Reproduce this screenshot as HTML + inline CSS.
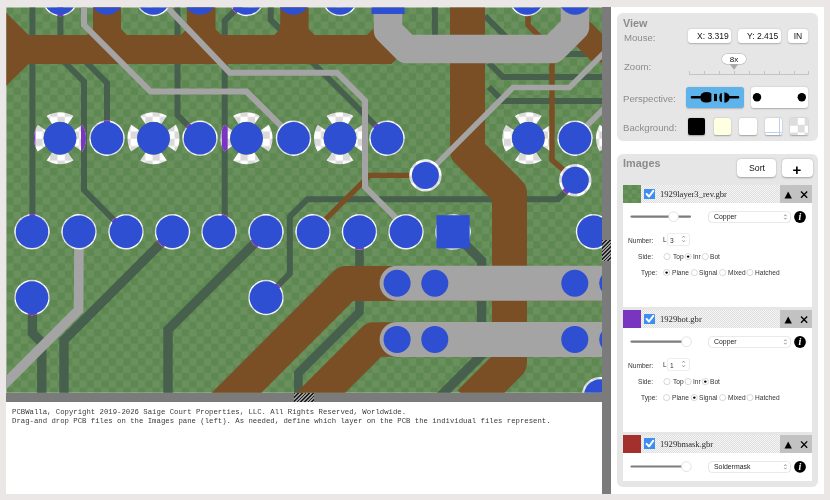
<!DOCTYPE html>
<html><head><meta charset="utf-8">
<style>
html,body{margin:0;padding:0;}
body{width:830px;height:500px;overflow:hidden;position:relative;background:#ece7e7;font-family:"Liberation Sans",sans-serif;}
.t{position:absolute;white-space:nowrap;line-height:1;will-change:transform;}
.r{position:absolute;}
</style></head><body>
<svg width="602" height="393" viewBox="0 0 602 393" style="position:absolute;left:0;top:0">
<defs>
<pattern id="gchk" patternUnits="userSpaceOnUse" x="6.20" y="7.00" width="14.64" height="14.64"><rect width="14.64" height="14.64" fill="#5d8851"/><rect x="7.32" width="7.32" height="7.32" fill="#6a915d"/><rect y="7.32" width="7.32" height="7.32" fill="#6a915d"/></pattern>
<pattern id="wchk" patternUnits="userSpaceOnUse" x="6.20" y="7.00" width="14.64" height="14.64"><rect width="14.64" height="14.64" fill="#d9d9d9"/><rect x="7.32" width="7.32" height="7.32" fill="#ffffff"/><rect y="7.32" width="7.32" height="7.32" fill="#ffffff"/></pattern>
<clipPath id="cv"><rect x="6.4" y="7.4" width="595.6" height="385.35"/></clipPath>
</defs>
<g clip-path="url(#cv)">
<rect x="0" y="0" width="602" height="393" fill="url(#gchk)"/>
<path d="M32.4 0.0 L32.4 232.0" fill="none" stroke="#475f4d" stroke-width="6" stroke-linejoin="miter" stroke-linecap="butt" />
<path d="M60.4 -2.0 L60.4 58.0 L84.0 81.6 L84.0 190.0 L126.0 232.0" fill="none" stroke="#475f4d" stroke-width="6" stroke-linejoin="miter" stroke-linecap="butt" />
<path d="M83.0 59.0 L107.0 83.0 L107.0 138.0" fill="none" stroke="#475f4d" stroke-width="6" stroke-linejoin="miter" stroke-linecap="butt" />
<path d="M177.5 0.0 L177.5 115.0 L200.0 137.5" fill="none" stroke="#475f4d" stroke-width="6" stroke-linejoin="miter" stroke-linecap="butt" />
<path d="M247.0 -1.5 L224.7 20.8 L224.7 232.0" fill="none" stroke="#475f4d" stroke-width="6" stroke-linejoin="miter" stroke-linecap="butt" />
<path d="M270.7 0.0 L270.7 20.0 L285.0 34.0" fill="none" stroke="#475f4d" stroke-width="6" stroke-linejoin="miter" stroke-linecap="butt" />
<path d="M303.0 53.0 L385.5 135.5" fill="none" stroke="#475f4d" stroke-width="6" stroke-linejoin="miter" stroke-linecap="butt" />
<path d="M434.9 0.0 L434.9 40.0" fill="none" stroke="#475f4d" stroke-width="6" stroke-linejoin="miter" stroke-linecap="butt" />
<path d="M485.0 16.0 L510.0 41.0" fill="none" stroke="#475f4d" stroke-width="6" stroke-linejoin="miter" stroke-linecap="butt" />
<path d="M489.0 63.0 L503.0 77.0 L610.0 77.0" fill="none" stroke="#475f4d" stroke-width="6" stroke-linejoin="miter" stroke-linecap="butt" />
<path d="M555.0 54.0 L610.0 54.0" fill="none" stroke="#475f4d" stroke-width="6" stroke-linejoin="miter" stroke-linecap="butt" />
<path d="M489.0 87.0 L503.0 101.0 L610.0 101.0" fill="none" stroke="#475f4d" stroke-width="6" stroke-linejoin="miter" stroke-linecap="butt" />
<path d="M266.0 297.5 L289.8 273.7 L289.8 216.5 L307.5 199.2 L558.0 199.2 L575.3 181.9" fill="none" stroke="#475f4d" stroke-width="6" stroke-linejoin="miter" stroke-linecap="butt" />
<path d="M453.0 232.0 L481.6 260.6 L481.6 355.0 L429.0 407.6" fill="none" stroke="#475f4d" stroke-width="9.4" stroke-linejoin="miter" stroke-linecap="butt" />
<path d="M32.4 297.5 L32.4 333.0 L41.8 342.4 L41.8 400.0" fill="none" stroke="#475f4d" stroke-width="9.4" stroke-linejoin="miter" stroke-linecap="butt" />
<path d="M172.5 231.8 L64.0 340.3 L64.0 400.0" fill="none" stroke="#475f4d" stroke-width="9.4" stroke-linejoin="miter" stroke-linecap="butt" />
<path d="M266.0 231.8 L168.0 329.8 L168.0 400.0" fill="none" stroke="#475f4d" stroke-width="9.4" stroke-linejoin="miter" stroke-linecap="butt" />
<path d="M359.5 231.8 L359.5 312.0 L298.4 373.0 L298.4 400.0" fill="none" stroke="#475f4d" stroke-width="8.6" stroke-linejoin="miter" stroke-linecap="butt" />
<path d="M82.29 124.81 A26.0 26.0 0 0 1 82.29 151.59 L74.26 146.10 A16.3 16.3 0 0 0 74.26 130.30 Z M73.39 160.49 A26.0 26.0 0 0 1 46.61 160.49 L52.10 152.46 A16.3 16.3 0 0 0 67.90 152.46 Z M37.71 151.59 A26.0 26.0 0 0 1 37.71 124.81 L45.74 130.30 A16.3 16.3 0 0 0 45.74 146.10 Z M46.61 115.91 A26.0 26.0 0 0 1 73.39 115.91 L67.90 123.94 A16.3 16.3 0 0 0 52.10 123.94 Z M175.79 124.81 A26.0 26.0 0 0 1 175.79 151.59 L167.76 146.10 A16.3 16.3 0 0 0 167.76 130.30 Z M166.89 160.49 A26.0 26.0 0 0 1 140.11 160.49 L145.60 152.46 A16.3 16.3 0 0 0 161.40 152.46 Z M131.21 151.59 A26.0 26.0 0 0 1 131.21 124.81 L139.24 130.30 A16.3 16.3 0 0 0 139.24 146.10 Z M140.11 115.91 A26.0 26.0 0 0 1 166.89 115.91 L161.40 123.94 A16.3 16.3 0 0 0 145.60 123.94 Z M268.79 124.81 A26.0 26.0 0 0 1 268.79 151.59 L260.76 146.10 A16.3 16.3 0 0 0 260.76 130.30 Z M259.89 160.49 A26.0 26.0 0 0 1 233.11 160.49 L238.60 152.46 A16.3 16.3 0 0 0 254.40 152.46 Z M224.21 151.59 A26.0 26.0 0 0 1 224.21 124.81 L232.24 130.30 A16.3 16.3 0 0 0 232.24 146.10 Z M233.11 115.91 A26.0 26.0 0 0 1 259.89 115.91 L254.40 123.94 A16.3 16.3 0 0 0 238.60 123.94 Z M362.29 124.81 A26.0 26.0 0 0 1 362.29 151.59 L354.26 146.10 A16.3 16.3 0 0 0 354.26 130.30 Z M353.39 160.49 A26.0 26.0 0 0 1 326.61 160.49 L332.10 152.46 A16.3 16.3 0 0 0 347.90 152.46 Z M317.71 151.59 A26.0 26.0 0 0 1 317.71 124.81 L325.74 130.30 A16.3 16.3 0 0 0 325.74 146.10 Z M326.61 115.91 A26.0 26.0 0 0 1 353.39 115.91 L347.90 123.94 A16.3 16.3 0 0 0 332.10 123.94 Z M550.59 124.81 A26.0 26.0 0 0 1 550.59 151.59 L542.56 146.10 A16.3 16.3 0 0 0 542.56 130.30 Z M541.69 160.49 A26.0 26.0 0 0 1 514.91 160.49 L520.40 152.46 A16.3 16.3 0 0 0 536.20 152.46 Z M506.01 151.59 A26.0 26.0 0 0 1 506.01 124.81 L514.04 130.30 A16.3 16.3 0 0 0 514.04 146.10 Z M514.91 115.91 A26.0 26.0 0 0 1 541.69 115.91 L536.20 123.94 A16.3 16.3 0 0 0 520.40 123.94 Z M644.29 124.81 A26.0 26.0 0 0 1 644.29 151.59 L636.26 146.10 A16.3 16.3 0 0 0 636.26 130.30 Z M635.39 160.49 A26.0 26.0 0 0 1 608.61 160.49 L614.10 152.46 A16.3 16.3 0 0 0 629.90 152.46 Z M599.71 151.59 A26.0 26.0 0 0 1 599.71 124.81 L607.74 130.30 A16.3 16.3 0 0 0 607.74 146.10 Z M608.61 115.91 A26.0 26.0 0 0 1 635.39 115.91 L629.90 123.94 A16.3 16.3 0 0 0 614.10 123.94 Z" fill="url(#wchk)"/>
<clipPath id="tclip"><path d="M82.29 124.81 A26.0 26.0 0 0 1 82.29 151.59 L74.26 146.10 A16.3 16.3 0 0 0 74.26 130.30 Z M73.39 160.49 A26.0 26.0 0 0 1 46.61 160.49 L52.10 152.46 A16.3 16.3 0 0 0 67.90 152.46 Z M37.71 151.59 A26.0 26.0 0 0 1 37.71 124.81 L45.74 130.30 A16.3 16.3 0 0 0 45.74 146.10 Z M46.61 115.91 A26.0 26.0 0 0 1 73.39 115.91 L67.90 123.94 A16.3 16.3 0 0 0 52.10 123.94 Z M175.79 124.81 A26.0 26.0 0 0 1 175.79 151.59 L167.76 146.10 A16.3 16.3 0 0 0 167.76 130.30 Z M166.89 160.49 A26.0 26.0 0 0 1 140.11 160.49 L145.60 152.46 A16.3 16.3 0 0 0 161.40 152.46 Z M131.21 151.59 A26.0 26.0 0 0 1 131.21 124.81 L139.24 130.30 A16.3 16.3 0 0 0 139.24 146.10 Z M140.11 115.91 A26.0 26.0 0 0 1 166.89 115.91 L161.40 123.94 A16.3 16.3 0 0 0 145.60 123.94 Z M268.79 124.81 A26.0 26.0 0 0 1 268.79 151.59 L260.76 146.10 A16.3 16.3 0 0 0 260.76 130.30 Z M259.89 160.49 A26.0 26.0 0 0 1 233.11 160.49 L238.60 152.46 A16.3 16.3 0 0 0 254.40 152.46 Z M224.21 151.59 A26.0 26.0 0 0 1 224.21 124.81 L232.24 130.30 A16.3 16.3 0 0 0 232.24 146.10 Z M233.11 115.91 A26.0 26.0 0 0 1 259.89 115.91 L254.40 123.94 A16.3 16.3 0 0 0 238.60 123.94 Z M362.29 124.81 A26.0 26.0 0 0 1 362.29 151.59 L354.26 146.10 A16.3 16.3 0 0 0 354.26 130.30 Z M353.39 160.49 A26.0 26.0 0 0 1 326.61 160.49 L332.10 152.46 A16.3 16.3 0 0 0 347.90 152.46 Z M317.71 151.59 A26.0 26.0 0 0 1 317.71 124.81 L325.74 130.30 A16.3 16.3 0 0 0 325.74 146.10 Z M326.61 115.91 A26.0 26.0 0 0 1 353.39 115.91 L347.90 123.94 A16.3 16.3 0 0 0 332.10 123.94 Z M550.59 124.81 A26.0 26.0 0 0 1 550.59 151.59 L542.56 146.10 A16.3 16.3 0 0 0 542.56 130.30 Z M541.69 160.49 A26.0 26.0 0 0 1 514.91 160.49 L520.40 152.46 A16.3 16.3 0 0 0 536.20 152.46 Z M506.01 151.59 A26.0 26.0 0 0 1 506.01 124.81 L514.04 130.30 A16.3 16.3 0 0 0 514.04 146.10 Z M514.91 115.91 A26.0 26.0 0 0 1 541.69 115.91 L536.20 123.94 A16.3 16.3 0 0 0 520.40 123.94 Z M644.29 124.81 A26.0 26.0 0 0 1 644.29 151.59 L636.26 146.10 A16.3 16.3 0 0 0 636.26 130.30 Z M635.39 160.49 A26.0 26.0 0 0 1 608.61 160.49 L614.10 152.46 A16.3 16.3 0 0 0 629.90 152.46 Z M599.71 151.59 A26.0 26.0 0 0 1 599.71 124.81 L607.74 130.30 A16.3 16.3 0 0 0 607.74 146.10 Z M608.61 115.91 A26.0 26.0 0 0 1 635.39 115.91 L629.90 123.94 A16.3 16.3 0 0 0 614.10 123.94 Z"/></clipPath>
<g clip-path="url(#tclip)">
<path d="M32.4 0.0 L32.4 232.0" fill="none" stroke="#7a35c2" stroke-width="6" stroke-linejoin="miter" stroke-linecap="butt" />
<path d="M60.4 -2.0 L60.4 58.0 L84.0 81.6 L84.0 190.0 L126.0 232.0" fill="none" stroke="#7a35c2" stroke-width="6" stroke-linejoin="miter" stroke-linecap="butt" />
<path d="M83.0 59.0 L107.0 83.0 L107.0 138.0" fill="none" stroke="#7a35c2" stroke-width="6" stroke-linejoin="miter" stroke-linecap="butt" />
<path d="M177.5 0.0 L177.5 115.0 L200.0 137.5" fill="none" stroke="#7a35c2" stroke-width="6" stroke-linejoin="miter" stroke-linecap="butt" />
<path d="M247.0 -1.5 L224.7 20.8 L224.7 232.0" fill="none" stroke="#7a35c2" stroke-width="6" stroke-linejoin="miter" stroke-linecap="butt" />
<path d="M270.7 0.0 L270.7 20.0 L285.0 34.0" fill="none" stroke="#7a35c2" stroke-width="6" stroke-linejoin="miter" stroke-linecap="butt" />
<path d="M303.0 53.0 L385.5 135.5" fill="none" stroke="#7a35c2" stroke-width="6" stroke-linejoin="miter" stroke-linecap="butt" />
<path d="M434.9 0.0 L434.9 40.0" fill="none" stroke="#7a35c2" stroke-width="6" stroke-linejoin="miter" stroke-linecap="butt" />
<path d="M485.0 16.0 L510.0 41.0" fill="none" stroke="#7a35c2" stroke-width="6" stroke-linejoin="miter" stroke-linecap="butt" />
<path d="M489.0 63.0 L503.0 77.0 L610.0 77.0" fill="none" stroke="#7a35c2" stroke-width="6" stroke-linejoin="miter" stroke-linecap="butt" />
<path d="M555.0 54.0 L610.0 54.0" fill="none" stroke="#7a35c2" stroke-width="6" stroke-linejoin="miter" stroke-linecap="butt" />
<path d="M489.0 87.0 L503.0 101.0 L610.0 101.0" fill="none" stroke="#7a35c2" stroke-width="6" stroke-linejoin="miter" stroke-linecap="butt" />
<path d="M266.0 297.5 L289.8 273.7 L289.8 216.5 L307.5 199.2 L558.0 199.2 L575.3 181.9" fill="none" stroke="#7a35c2" stroke-width="6" stroke-linejoin="miter" stroke-linecap="butt" />
<path d="M453.0 232.0 L481.6 260.6 L481.6 355.0 L429.0 407.6" fill="none" stroke="#7a35c2" stroke-width="9.4" stroke-linejoin="miter" stroke-linecap="butt" />
<path d="M32.4 297.5 L32.4 333.0 L41.8 342.4 L41.8 400.0" fill="none" stroke="#7a35c2" stroke-width="9.4" stroke-linejoin="miter" stroke-linecap="butt" />
<path d="M172.5 231.8 L64.0 340.3 L64.0 400.0" fill="none" stroke="#7a35c2" stroke-width="9.4" stroke-linejoin="miter" stroke-linecap="butt" />
<path d="M266.0 231.8 L168.0 329.8 L168.0 400.0" fill="none" stroke="#7a35c2" stroke-width="9.4" stroke-linejoin="miter" stroke-linecap="butt" />
<path d="M359.5 231.8 L359.5 312.0 L298.4 373.0 L298.4 400.0" fill="none" stroke="#7a35c2" stroke-width="8.6" stroke-linejoin="miter" stroke-linecap="butt" />
</g>
<polygon points="6,12.5 28.5,35 87,35 93,29 93,-5 121,-5 121,29 127,35 180.8,35 186.8,29 186.8,-5 215.5,-5 215.5,29 221.5,35 274.2,35 280.2,29 280.2,-5 308.6,-5 308.6,29 314.6,35 367,35 373.5,28.5 380,28.5 396,46 396,59.5 391.5,64 28.5,64 6,86" fill="#7b4f26"/>
<path d="M467.5 -5.0 L467.5 151.0 L509.5 193.0 L509.5 363.0 L470.0 402.5" fill="none" stroke="#7b4f26" stroke-width="35" stroke-linejoin="round" stroke-linecap="butt" />
<path d="M200.0 429.3 L346.0 283.4 L620.0 283.4" fill="none" stroke="#7b4f26" stroke-width="35" stroke-linejoin="round" stroke-linecap="butt" />
<path d="M290.0 423.5 L374.0 339.5 L620.0 339.5" fill="none" stroke="#7b4f26" stroke-width="34.5" stroke-linejoin="round" stroke-linecap="butt" />
<polygon points="589.3,21 620,51.7 620,64 591.8,61.6 560,30 575,10" fill="#7b4f26"/>
<path d="M528.0 -1.5 L528.0 25.0 L552.0 49.0 L552.0 160.0 L575.3 180.3" fill="none" stroke="#7b4f26" stroke-width="5.5" stroke-linejoin="miter" stroke-linecap="butt" />
<path d="M313.0 231.8 L369.6 175.4 L425.0 175.4" fill="none" stroke="#7b4f26" stroke-width="5.2" stroke-linejoin="miter" stroke-linecap="butt" />
<path d="M84.0 -5.0 L84.0 25.0 L150.5 91.5 L246.5 91.5 L293.5 138.2" fill="none" stroke="#a4a4a4" stroke-width="6" stroke-linejoin="miter" stroke-linecap="butt" />
<path d="M155.4 -5.0 L229.8 72.7 L337.0 72.7 L365.0 100.7 L365.0 187.0 L410.0 232.0" fill="none" stroke="#a4a4a4" stroke-width="6" stroke-linejoin="miter" stroke-linecap="butt" />
<path d="M425.4 175.4 L513.0 87.5 L569.5 87.5 L610.0 47.0" fill="none" stroke="#a4a4a4" stroke-width="5.5" stroke-linejoin="miter" stroke-linecap="butt" />
<path d="M575.0 137.5 L612.0 100.5" fill="none" stroke="#a4a4a4" stroke-width="5.5" stroke-linejoin="miter" stroke-linecap="butt" />
<path d="M79.0 231.8 L78.6 310.0 L-5.0 393.6" fill="none" stroke="#a4a4a4" stroke-width="9.6" stroke-linejoin="miter" stroke-linecap="butt" />
<path d="M388.0 -10.0 L388.0 30.5 L406.5 49.0 L553.0 49.0 L575.0 27.0 L575.0 -10.0" fill="none" stroke="#a4a4a4" stroke-width="28.5" stroke-linejoin="round" stroke-linecap="butt" />
<path d="M397.1 283.2 L620 283.2" stroke="#a4a4a4" stroke-width="35" stroke-linecap="round" fill="none"/>
<path d="M397.1 339.4 L620 339.4" stroke="#a4a4a4" stroke-width="35" stroke-linecap="round" fill="none"/>
<circle cx="60" cy="-1.5" r="17.7" fill="url(#wchk)"/>
<circle cx="153.5" cy="-1.5" r="17.7" fill="url(#wchk)"/>
<circle cx="246.5" cy="-1.5" r="17.7" fill="url(#wchk)"/>
<circle cx="340" cy="-1.5" r="17.7" fill="url(#wchk)"/>
<circle cx="527" cy="-1.5" r="17.7" fill="url(#wchk)"/>
<circle cx="107" cy="138.2" r="17.7" fill="url(#wchk)"/>
<circle cx="200" cy="138.2" r="17.7" fill="url(#wchk)"/>
<circle cx="293.5" cy="138.2" r="17.7" fill="url(#wchk)"/>
<circle cx="387" cy="138.2" r="17.7" fill="url(#wchk)"/>
<circle cx="575" cy="138.2" r="17.7" fill="url(#wchk)"/>
<circle cx="32" cy="231.8" r="17.7" fill="url(#wchk)"/>
<circle cx="79" cy="231.8" r="17.7" fill="url(#wchk)"/>
<circle cx="126" cy="231.8" r="17.7" fill="url(#wchk)"/>
<circle cx="172.5" cy="231.8" r="17.7" fill="url(#wchk)"/>
<circle cx="219" cy="231.8" r="17.7" fill="url(#wchk)"/>
<circle cx="266" cy="231.8" r="17.7" fill="url(#wchk)"/>
<circle cx="313" cy="231.8" r="17.7" fill="url(#wchk)"/>
<circle cx="359.5" cy="231.8" r="17.7" fill="url(#wchk)"/>
<circle cx="406" cy="231.8" r="17.7" fill="url(#wchk)"/>
<circle cx="593.5" cy="231.8" r="17.7" fill="url(#wchk)"/>
<circle cx="32" cy="297.5" r="17.7" fill="url(#wchk)"/>
<circle cx="266" cy="297.5" r="17.7" fill="url(#wchk)"/>
<circle cx="600.3" cy="395.5" r="18.6" fill="url(#wchk)"/>
<circle cx="453" cy="232" r="17.8" fill="url(#wchk)"/>
<circle cx="425.4" cy="175.4" r="16.2" fill="url(#wchk)"/>
<circle cx="575.3" cy="180.3" r="16.2" fill="url(#wchk)"/>
<clipPath id="rclip"><circle cx="60" cy="-1.5" r="17.7"/><circle cx="153.5" cy="-1.5" r="17.7"/><circle cx="246.5" cy="-1.5" r="17.7"/><circle cx="340" cy="-1.5" r="17.7"/><circle cx="527" cy="-1.5" r="17.7"/><circle cx="107" cy="138.2" r="17.7"/><circle cx="200" cy="138.2" r="17.7"/><circle cx="293.5" cy="138.2" r="17.7"/><circle cx="387" cy="138.2" r="17.7"/><circle cx="575" cy="138.2" r="17.7"/><circle cx="32" cy="231.8" r="17.7"/><circle cx="79" cy="231.8" r="17.7"/><circle cx="126" cy="231.8" r="17.7"/><circle cx="172.5" cy="231.8" r="17.7"/><circle cx="219" cy="231.8" r="17.7"/><circle cx="266" cy="231.8" r="17.7"/><circle cx="313" cy="231.8" r="17.7"/><circle cx="359.5" cy="231.8" r="17.7"/><circle cx="406" cy="231.8" r="17.7"/><circle cx="593.5" cy="231.8" r="17.7"/><circle cx="32" cy="297.5" r="17.7"/><circle cx="266" cy="297.5" r="17.7"/><circle cx="425.4" cy="175.4" r="16.2"/><circle cx="575.3" cy="180.3" r="16.2"/></clipPath>
<g clip-path="url(#rclip)">
<path d="M32.4 0.0 L32.4 232.0" fill="none" stroke="#7a35c2" stroke-width="6" stroke-linejoin="miter" stroke-linecap="butt" />
<path d="M60.4 -2.0 L60.4 58.0 L84.0 81.6 L84.0 190.0 L126.0 232.0" fill="none" stroke="#7a35c2" stroke-width="6" stroke-linejoin="miter" stroke-linecap="butt" />
<path d="M83.0 59.0 L107.0 83.0 L107.0 138.0" fill="none" stroke="#7a35c2" stroke-width="6" stroke-linejoin="miter" stroke-linecap="butt" />
<path d="M177.5 0.0 L177.5 115.0 L200.0 137.5" fill="none" stroke="#7a35c2" stroke-width="6" stroke-linejoin="miter" stroke-linecap="butt" />
<path d="M247.0 -1.5 L224.7 20.8 L224.7 232.0" fill="none" stroke="#7a35c2" stroke-width="6" stroke-linejoin="miter" stroke-linecap="butt" />
<path d="M270.7 0.0 L270.7 20.0 L285.0 34.0" fill="none" stroke="#7a35c2" stroke-width="6" stroke-linejoin="miter" stroke-linecap="butt" />
<path d="M303.0 53.0 L385.5 135.5" fill="none" stroke="#7a35c2" stroke-width="6" stroke-linejoin="miter" stroke-linecap="butt" />
<path d="M434.9 0.0 L434.9 40.0" fill="none" stroke="#7a35c2" stroke-width="6" stroke-linejoin="miter" stroke-linecap="butt" />
<path d="M485.0 16.0 L510.0 41.0" fill="none" stroke="#7a35c2" stroke-width="6" stroke-linejoin="miter" stroke-linecap="butt" />
<path d="M489.0 63.0 L503.0 77.0 L610.0 77.0" fill="none" stroke="#7a35c2" stroke-width="6" stroke-linejoin="miter" stroke-linecap="butt" />
<path d="M555.0 54.0 L610.0 54.0" fill="none" stroke="#7a35c2" stroke-width="6" stroke-linejoin="miter" stroke-linecap="butt" />
<path d="M489.0 87.0 L503.0 101.0 L610.0 101.0" fill="none" stroke="#7a35c2" stroke-width="6" stroke-linejoin="miter" stroke-linecap="butt" />
<path d="M266.0 297.5 L289.8 273.7 L289.8 216.5 L307.5 199.2 L558.0 199.2 L575.3 181.9" fill="none" stroke="#7a35c2" stroke-width="6" stroke-linejoin="miter" stroke-linecap="butt" />
<path d="M453.0 232.0 L481.6 260.6 L481.6 355.0 L429.0 407.6" fill="none" stroke="#7a35c2" stroke-width="9.4" stroke-linejoin="miter" stroke-linecap="butt" />
<path d="M32.4 297.5 L32.4 333.0 L41.8 342.4 L41.8 400.0" fill="none" stroke="#7a35c2" stroke-width="9.4" stroke-linejoin="miter" stroke-linecap="butt" />
<path d="M172.5 231.8 L64.0 340.3 L64.0 400.0" fill="none" stroke="#7a35c2" stroke-width="9.4" stroke-linejoin="miter" stroke-linecap="butt" />
<path d="M266.0 231.8 L168.0 329.8 L168.0 400.0" fill="none" stroke="#7a35c2" stroke-width="9.4" stroke-linejoin="miter" stroke-linecap="butt" />
<path d="M359.5 231.8 L359.5 312.0 L298.4 373.0 L298.4 400.0" fill="none" stroke="#7a35c2" stroke-width="8.6" stroke-linejoin="miter" stroke-linecap="butt" />
</g>
<circle cx="60" cy="-1.5" r="16.3" fill="#2e4fd2"/>
<circle cx="107" cy="-1.5" r="16.3" fill="#2e4fd2"/>
<circle cx="153.5" cy="-1.5" r="16.3" fill="#2e4fd2"/>
<circle cx="200" cy="-1.5" r="16.3" fill="#2e4fd2"/>
<circle cx="246.5" cy="-1.5" r="16.3" fill="#2e4fd2"/>
<circle cx="293.5" cy="-1.5" r="16.3" fill="#2e4fd2"/>
<circle cx="340" cy="-1.5" r="16.3" fill="#2e4fd2"/>
<circle cx="527" cy="-1.5" r="16.3" fill="#2e4fd2"/>
<circle cx="575" cy="-1.5" r="16.3" fill="#2e4fd2"/>
<circle cx="60" cy="138.2" r="16.3" fill="#2e4fd2"/>
<circle cx="107" cy="138.2" r="16.3" fill="#2e4fd2"/>
<circle cx="153.5" cy="138.2" r="16.3" fill="#2e4fd2"/>
<circle cx="200" cy="138.2" r="16.3" fill="#2e4fd2"/>
<circle cx="246.5" cy="138.2" r="16.3" fill="#2e4fd2"/>
<circle cx="293.5" cy="138.2" r="16.3" fill="#2e4fd2"/>
<circle cx="340" cy="138.2" r="16.3" fill="#2e4fd2"/>
<circle cx="387" cy="138.2" r="16.3" fill="#2e4fd2"/>
<circle cx="528.3" cy="138.2" r="16.3" fill="#2e4fd2"/>
<circle cx="575" cy="138.2" r="16.3" fill="#2e4fd2"/>
<circle cx="622" cy="138.2" r="16.3" fill="#2e4fd2"/>
<circle cx="32" cy="231.8" r="16.3" fill="#2e4fd2"/>
<circle cx="79" cy="231.8" r="16.3" fill="#2e4fd2"/>
<circle cx="126" cy="231.8" r="16.3" fill="#2e4fd2"/>
<circle cx="172.5" cy="231.8" r="16.3" fill="#2e4fd2"/>
<circle cx="219" cy="231.8" r="16.3" fill="#2e4fd2"/>
<circle cx="266" cy="231.8" r="16.3" fill="#2e4fd2"/>
<circle cx="313" cy="231.8" r="16.3" fill="#2e4fd2"/>
<circle cx="359.5" cy="231.8" r="16.3" fill="#2e4fd2"/>
<circle cx="406" cy="231.8" r="16.3" fill="#2e4fd2"/>
<circle cx="593.5" cy="231.8" r="16.3" fill="#2e4fd2"/>
<circle cx="32" cy="297.5" r="16.3" fill="#2e4fd2"/>
<circle cx="266" cy="297.5" r="16.3" fill="#2e4fd2"/>
<circle cx="600.3" cy="395.5" r="16.3" fill="#2e4fd2"/>
<circle cx="425.4" cy="175.4" r="13.5" fill="#2e4fd2"/>
<circle cx="575.3" cy="180.3" r="13.5" fill="#2e4fd2"/>
<rect x="371.5" y="-20" width="33.1" height="34" fill="#2e4fd2"/>
<rect x="436.5" y="215.2" width="33.2" height="33.2" fill="#2e4fd2"/>
<circle cx="397.1" cy="283.2" r="13.5" fill="#2e4fd2"/>
<circle cx="434.8" cy="283.2" r="13.5" fill="#2e4fd2"/>
<circle cx="574.8" cy="283.2" r="13.5" fill="#2e4fd2"/>
<circle cx="612.7" cy="283.2" r="13.5" fill="#2e4fd2"/>
<circle cx="397.1" cy="339.4" r="13.5" fill="#2e4fd2"/>
<circle cx="434.8" cy="339.4" r="13.5" fill="#2e4fd2"/>
<circle cx="574.8" cy="339.4" r="13.5" fill="#2e4fd2"/>
<circle cx="612.7" cy="339.4" r="13.5" fill="#2e4fd2"/>
</g>
</svg>
<div class="r" style="left:6.40px;top:401.75px;width:595.60px;height:91.75px;background:#fff"></div>
<div class="r" style="left:602.00px;top:7.00px;width:8.70px;height:486.50px;background:#7b7b7b"></div>
<div class="r" style="left:6.40px;top:392.75px;width:595.60px;height:9.00px;background:#7b7b7b"></div>
<div class="r" style="left:293.90px;top:392.75px;width:20.10px;height:9.00px;background:repeating-linear-gradient(135deg,#222 0 1.2px,#9a9a9a 1.2px 2.6px)"></div>
<div class="r" style="left:602.00px;top:240.00px;width:8.70px;height:21.00px;background:repeating-linear-gradient(135deg,#222 0 1.2px,#9a9a9a 1.2px 2.6px)"></div>
<div class="t" style="left:11.50px;top:409.20px;font-size:7.3px;color:#3a3a3a;font-family:'Liberation Mono', monospace;font-weight:normal;">PCBWalla, Copyright 2019-2026 Saige Court Properties, LLC. All Rights Reserved, Worldwide.</div>
<div class="t" style="left:11.50px;top:417.50px;font-size:7.3px;color:#3a3a3a;font-family:'Liberation Mono', monospace;font-weight:normal;">Drag-and drop PCB files on the Images pane (left). As needed, define which layer on the PCB the individual files represent.</div>
<div class="r" style="left:610.70px;top:7.00px;width:213.70px;height:486.50px;background:#fff"></div>
<div class="r" style="left:617.30px;top:13.10px;width:200.50px;height:127.70px;background:#e6e6e6;border-radius:6px"></div>
<div class="t" style="left:622.90px;top:17.66px;font-size:10.8px;color:#8c8c8c;font-family:'Liberation Sans', sans-serif;font-weight:bold;">View</div>
<div class="t" style="left:623.50px;top:32.87px;font-size:9.6px;color:#8c8c8c;font-family:'Liberation Sans', sans-serif;font-weight:normal;">Mouse:</div>
<div class="t" style="left:623.50px;top:61.77px;font-size:9.6px;color:#8c8c8c;font-family:'Liberation Sans', sans-serif;font-weight:normal;">Zoom:</div>
<div class="t" style="left:623.40px;top:94.27px;font-size:9.6px;color:#8c8c8c;font-family:'Liberation Sans', sans-serif;font-weight:normal;">Perspective:</div>
<div class="t" style="left:623.40px;top:123.17px;font-size:9.6px;color:#8c8c8c;font-family:'Liberation Sans', sans-serif;font-weight:normal;">Background:</div>
<div class="r" style="left:688.10px;top:29.30px;width:42.90px;height:14.00px;background:#fff;border-radius:3px;box-shadow:0 0.8px 1.6px rgba(0,0,0,0.25)"></div>
<div class="r" style="left:738.20px;top:29.30px;width:42.60px;height:14.00px;background:#fff;border-radius:3px;box-shadow:0 0.8px 1.6px rgba(0,0,0,0.25)"></div>
<div class="r" style="left:788.00px;top:29.30px;width:20.20px;height:14.00px;background:#fff;border-radius:3px;box-shadow:0 0.8px 1.6px rgba(0,0,0,0.25)"></div>
<div class="t" style="right:101.80px;top:32.30px;font-size:8.5px;color:#111;font-family:'Liberation Sans', sans-serif;font-weight:normal;">X: 3.319</div>
<div class="t" style="right:52.10px;top:32.30px;font-size:8.5px;color:#111;font-family:'Liberation Sans', sans-serif;font-weight:normal;">Y: 2.415</div>
<div class="t" style="left:698.10px;width:200px;text-align:center;top:32.30px;font-size:8.5px;color:#111;font-family:'Liberation Sans', sans-serif;font-weight:normal;">IN</div>
<div class="r" style="left:689.30px;top:73.50px;width:119.70px;height:1.00px;background:#c4c4c4"></div>
<div class="r" style="left:688.80px;top:70.60px;width:1.00px;height:3.40px;background:#c4c4c4"></div>
<div class="r" style="left:703.76px;top:70.60px;width:1.00px;height:3.40px;background:#c4c4c4"></div>
<div class="r" style="left:718.72px;top:70.60px;width:1.00px;height:3.40px;background:#c4c4c4"></div>
<div class="r" style="left:733.68px;top:70.60px;width:1.00px;height:3.40px;background:#c4c4c4"></div>
<div class="r" style="left:748.64px;top:70.60px;width:1.00px;height:3.40px;background:#c4c4c4"></div>
<div class="r" style="left:763.60px;top:70.60px;width:1.00px;height:3.40px;background:#c4c4c4"></div>
<div class="r" style="left:778.56px;top:70.60px;width:1.00px;height:3.40px;background:#c4c4c4"></div>
<div class="r" style="left:793.52px;top:70.60px;width:1.00px;height:3.40px;background:#c4c4c4"></div>
<div class="r" style="left:808.48px;top:70.60px;width:1.00px;height:3.40px;background:#c4c4c4"></div>
<svg style="position:absolute;left:0;top:0" width="830" height="500"><polygon points="729.7,64 738.3,64 734,69.8" fill="#a9a9a9"/></svg>
<div class="r" style="left:722.40px;top:53.60px;width:23.20px;height:10.40px;background:#fff;border-radius:6px;box-shadow:0 0 0 0.5px #b0b0b0"></div>
<div class="t" style="left:634.00px;width:200px;text-align:center;top:55.83px;font-size:8px;color:#111;font-family:'Liberation Sans', sans-serif;font-weight:normal;">8x</div>
<div class="r" style="left:686.30px;top:87.10px;width:57.40px;height:20.60px;background:#5db3ea;border-radius:3px;box-shadow:0 0.8px 1.5px rgba(0,0,0,0.2)"></div>
<div class="r" style="left:750.80px;top:86.60px;width:57.70px;height:21.10px;background:#fff;border-radius:3px;box-shadow:0 0.8px 1.5px rgba(0,0,0,0.25)"></div>
<svg style="position:absolute;left:0;top:0" width="830" height="500">
<path d="M691.9 97.2 L702 97.2 M727 97.2 L738.1 97.2" stroke="#000" stroke-width="2.4" stroke-linecap="round"/>
<path d="M711.4 93.4 Q709.5 92.1 706 92.1 Q700.4 92.3 700.4 97.3 Q700.4 102.5 706 102.6 Q709.5 102.6 711.4 101.3 Z" fill="#000"/>
<rect x="714" y="93.9" width="3" height="7.2" fill="#000"/>
<path d="M719.9 93.8 L721.9 92.9 L721.9 102.2 L719.9 101.3 L719.2 97.5 Z" fill="#000"/>
<path d="M724.4 92.3 Q729.6 93.2 729.6 97.4 Q729.6 101.8 724.4 102.7 Z" fill="#000"/>
<circle cx="757" cy="97.2" r="4.2" fill="#000"/>
<circle cx="801.8" cy="97.2" r="4.2" fill="#000"/>
</svg>
<div class="r" style="left:688.40px;top:118.30px;width:16.90px;height:16.50px;background:#000;border-radius:2px;box-shadow:0 0.8px 1.5px rgba(0,0,0,0.3)"></div>
<div class="r" style="left:713.70px;top:118.30px;width:17.30px;height:16.50px;background:#ffffe2;border-radius:2px;box-shadow:0 0.8px 1.5px rgba(0,0,0,0.3)"></div>
<div class="r" style="left:739.40px;top:118.30px;width:17.30px;height:16.50px;background:#fff;border-radius:2px;box-shadow:0 0.8px 1.5px rgba(0,0,0,0.3)"></div>
<div class="r" style="left:764.80px;top:118.30px;width:17.20px;height:16.50px;background:#fff;border-radius:2px;box-shadow:0 0.8px 1.5px rgba(0,0,0,0.3)"></div>
<div class="r" style="left:779.20px;top:118.30px;width:0.70px;height:16.50px;background:#b8d0f8"></div>
<div class="r" style="left:764.80px;top:131.90px;width:17.20px;height:0.70px;background:#b8d0f8"></div>
<div class="r" style="left:790.40px;top:118.30px;width:17.30px;height:16.50px;background:conic-gradient(#fff 0 25%,#ddd 0 50%,#fff 0 75%,#ddd 0);background-size:14.6px 14.6px;border-radius:2px;box-shadow:0 0.8px 1.5px rgba(0,0,0,0.3)"></div>
<div class="r" style="left:617.30px;top:153.90px;width:200.80px;height:332.90px;background:#e6e6e6;border-radius:6px"></div>
<div class="t" style="left:623.20px;top:158.07px;font-size:10.9px;color:#8c8c8c;font-family:'Liberation Sans', sans-serif;font-weight:bold;">Images</div>
<div class="r" style="left:737.00px;top:158.90px;width:39.20px;height:18.50px;background:#fff;border-radius:4px;box-shadow:0 0.8px 1.8px rgba(0,0,0,0.3)"></div>
<div class="r" style="left:782.00px;top:158.90px;width:30.90px;height:18.50px;background:#fff;border-radius:4px;box-shadow:0 0.8px 1.8px rgba(0,0,0,0.3)"></div>
<div class="t" style="left:656.60px;width:200px;text-align:center;top:163.74px;font-size:8.7px;color:#111;font-family:'Liberation Sans', sans-serif;font-weight:normal;">Sort</div>
<div class="t" style="left:697.30px;width:200px;text-align:center;top:161.50px;font-size:15px;color:#000;font-family:'Liberation Sans', sans-serif;font-weight:bold;">+</div>
<div class="r" style="left:623.00px;top:185.20px;width:189.00px;height:121.80px;background:#fff"></div>
<div class="r" style="left:623.00px;top:185.20px;width:189.00px;height:17.90px;background:conic-gradient(#dedede 0 25%,#f6f6f6 0 50%,#dedede 0 75%,#f6f6f6 0);background-size:2px 2px"></div>
<div class="r" style="left:623.00px;top:185.20px;width:18.00px;height:17.90px;background:#5f8c53;background-image:conic-gradient(#6a935d 0 25%,transparent 0 50%,#6a935d 0 75%,transparent 0);background-size:8.9px 8.9px;background-position:0 0"></div>
<div class="r" style="left:644.40px;top:188.50px;width:10.90px;height:10.80px;background:#3d8ef0;border-radius:0.6px"></div>
<svg style="position:absolute;left:0;top:0" width="830" height="500"><path d="M646.6 194.0 L649 196.5 L653.3 190.8" fill="none" stroke="#fff" stroke-width="2" stroke-linecap="round" stroke-linejoin="round"/></svg>
<div class="t" style="left:659.70px;top:189.60px;font-size:8.6px;color:#2a2a2a;font-family:'Liberation Serif', serif;font-weight:normal;">1929layer3_rev.gbr</div>
<div class="r" style="left:780.20px;top:185.20px;width:31.80px;height:17.90px;background:#c2c2c2"></div>
<svg style="position:absolute;left:0;top:0" width="830" height="500"><polygon points="788.2,191.6 791.9,198.5 784.5,198.5" fill="#000"/><path d="M801 191.5 L807.2 197.8 M807.2 191.5 L801 197.8" stroke="#000" stroke-width="1.3"/></svg>
<svg style="position:absolute;left:0;top:0" width="830" height="500"><line x1="631.5" y1="216.6" x2="690" y2="216.6" stroke="#7c7c7c" stroke-width="2.2" stroke-linecap="round"/><circle cx="673.5" cy="216.7" r="4.9" fill="#fff" stroke="#d0d0d0" stroke-width="0.6"/></svg>
<div class="r" style="left:709.20px;top:211.80px;width:81.00px;height:10.00px;background:#fff;border-radius:3px;box-shadow:0 0 0 0.6px #d6d6d6"></div>
<div class="t" style="left:713.70px;top:213.76px;font-size:6.9px;color:#222;font-family:'Liberation Sans', sans-serif;font-weight:normal;">Copper</div>
<svg style="position:absolute;left:0;top:0" width="830" height="500"><path d="M784.3 216.1 L785.4 214.7 L786.5 216.1 M784.3 217.8 L785.4 219.2 L786.5 217.8" fill="none" stroke="#555" stroke-width="0.6"/><circle cx="800" cy="217.0" r="5.9" fill="#000"/></svg>
<div class="t" style="left:700.10px;width:200px;text-align:center;top:212.22px;font-size:10px;color:#fff;font-family:'Liberation Serif', serif;font-weight:bold;font-style:italic;">i</div>
<div class="t" style="right:177.20px;top:237.51px;font-size:6.6px;color:#333;font-family:'Liberation Sans', sans-serif;font-weight:normal;">Number:</div>
<div class="t" style="left:662.60px;top:237.01px;font-size:6.6px;color:#333;font-family:'Liberation Sans', sans-serif;font-weight:normal;">L</div>
<div class="r" style="left:668.20px;top:233.60px;width:21.00px;height:11.60px;background:#fff;box-shadow:0 0 0 0.6px #ddd;border-radius:1px"></div>
<div class="t" style="left:670.30px;top:237.51px;font-size:6.6px;color:#333;font-family:'Liberation Sans', sans-serif;font-weight:normal;">3</div>
<svg style="position:absolute;left:0;top:0" width="830" height="500"><path d="M682.3 237.6 L683.6 236.1 L684.9 237.6 M682.3 240.3 L683.6 241.8 L684.9 240.3" fill="none" stroke="#555" stroke-width="0.6"/></svg>
<div class="t" style="right:176.50px;top:253.81px;font-size:6.6px;color:#333;font-family:'Liberation Sans', sans-serif;font-weight:normal;">Side:</div>
<div class="t" style="left:672.90px;top:253.81px;font-size:6.6px;color:#333;font-family:'Liberation Sans', sans-serif;font-weight:normal;">Top</div>
<div class="t" style="left:692.60px;top:253.81px;font-size:6.6px;color:#333;font-family:'Liberation Sans', sans-serif;font-weight:normal;">Inr</div>
<div class="t" style="left:710.00px;top:253.81px;font-size:6.6px;color:#333;font-family:'Liberation Sans', sans-serif;font-weight:normal;">Bot</div>
<div class="t" style="right:172.60px;top:269.51px;font-size:6.6px;color:#333;font-family:'Liberation Sans', sans-serif;font-weight:normal;">Type:</div>
<div class="t" style="left:672.40px;top:269.51px;font-size:6.6px;color:#333;font-family:'Liberation Sans', sans-serif;font-weight:normal;">Plane</div>
<div class="t" style="left:699.00px;top:269.51px;font-size:6.6px;color:#333;font-family:'Liberation Sans', sans-serif;font-weight:normal;">Signal</div>
<div class="t" style="left:727.70px;top:269.51px;font-size:6.6px;color:#333;font-family:'Liberation Sans', sans-serif;font-weight:normal;">Mixed</div>
<div class="t" style="left:755.00px;top:269.51px;font-size:6.6px;color:#333;font-family:'Liberation Sans', sans-serif;font-weight:normal;">Hatched</div>
<svg style="position:absolute;left:0;top:0" width="830" height="500"><circle cx="667" cy="256.6" r="3.1" fill="#fff" stroke="#bdbdbd" stroke-width="0.6"/><circle cx="688.1" cy="256.6" r="3.1" fill="#fff" stroke="#bdbdbd" stroke-width="0.6"/><circle cx="688.1" cy="256.6" r="1.2" fill="#000"/><circle cx="705.3" cy="256.6" r="3.1" fill="#fff" stroke="#bdbdbd" stroke-width="0.6"/><circle cx="666.6" cy="272.6" r="3.1" fill="#fff" stroke="#bdbdbd" stroke-width="0.6"/><circle cx="666.6" cy="272.6" r="1.2" fill="#000"/><circle cx="694.3" cy="272.6" r="3.1" fill="#fff" stroke="#bdbdbd" stroke-width="0.6"/><circle cx="722.6" cy="272.6" r="3.1" fill="#fff" stroke="#bdbdbd" stroke-width="0.6"/><circle cx="750" cy="272.6" r="3.1" fill="#fff" stroke="#bdbdbd" stroke-width="0.6"/></svg>
<div class="r" style="left:623.00px;top:310.20px;width:189.00px;height:122.10px;background:#fff"></div>
<div class="r" style="left:623.00px;top:310.20px;width:189.00px;height:17.90px;background:conic-gradient(#dedede 0 25%,#f6f6f6 0 50%,#dedede 0 75%,#f6f6f6 0);background-size:2px 2px"></div>
<div class="r" style="left:623.00px;top:310.20px;width:18.00px;height:17.90px;background:#7a35c0"></div>
<div class="r" style="left:644.40px;top:313.50px;width:10.90px;height:10.80px;background:#3d8ef0;border-radius:0.6px"></div>
<svg style="position:absolute;left:0;top:0" width="830" height="500"><path d="M646.6 319.0 L649 321.5 L653.3 315.8" fill="none" stroke="#fff" stroke-width="2" stroke-linecap="round" stroke-linejoin="round"/></svg>
<div class="t" style="left:659.70px;top:314.60px;font-size:8.6px;color:#2a2a2a;font-family:'Liberation Serif', serif;font-weight:normal;">1929bot.gbr</div>
<div class="r" style="left:780.20px;top:310.20px;width:31.80px;height:17.90px;background:#c2c2c2"></div>
<svg style="position:absolute;left:0;top:0" width="830" height="500"><polygon points="788.2,316.6 791.9,323.5 784.5,323.5" fill="#000"/><path d="M801 316.5 L807.2 322.8 M807.2 316.5 L801 322.8" stroke="#000" stroke-width="1.3"/></svg>
<svg style="position:absolute;left:0;top:0" width="830" height="500"><line x1="631.5" y1="341.6" x2="690" y2="341.6" stroke="#7c7c7c" stroke-width="2.2" stroke-linecap="round"/><circle cx="686.5" cy="341.7" r="4.9" fill="#fff" stroke="#d0d0d0" stroke-width="0.6"/></svg>
<div class="r" style="left:709.20px;top:336.80px;width:81.00px;height:10.00px;background:#fff;border-radius:3px;box-shadow:0 0 0 0.6px #d6d6d6"></div>
<div class="t" style="left:713.70px;top:338.76px;font-size:6.9px;color:#222;font-family:'Liberation Sans', sans-serif;font-weight:normal;">Copper</div>
<svg style="position:absolute;left:0;top:0" width="830" height="500"><path d="M784.3 341.1 L785.4 339.7 L786.5 341.1 M784.3 342.8 L785.4 344.2 L786.5 342.8" fill="none" stroke="#555" stroke-width="0.6"/><circle cx="800" cy="342.0" r="5.9" fill="#000"/></svg>
<div class="t" style="left:700.10px;width:200px;text-align:center;top:337.22px;font-size:10px;color:#fff;font-family:'Liberation Serif', serif;font-weight:bold;font-style:italic;">i</div>
<div class="t" style="right:177.20px;top:362.51px;font-size:6.6px;color:#333;font-family:'Liberation Sans', sans-serif;font-weight:normal;">Number:</div>
<div class="t" style="left:662.60px;top:362.01px;font-size:6.6px;color:#333;font-family:'Liberation Sans', sans-serif;font-weight:normal;">L</div>
<div class="r" style="left:668.20px;top:358.60px;width:21.00px;height:11.60px;background:#fff;box-shadow:0 0 0 0.6px #ddd;border-radius:1px"></div>
<div class="t" style="left:670.30px;top:362.51px;font-size:6.6px;color:#333;font-family:'Liberation Sans', sans-serif;font-weight:normal;">1</div>
<svg style="position:absolute;left:0;top:0" width="830" height="500"><path d="M682.3 362.6 L683.6 361.1 L684.9 362.6 M682.3 365.3 L683.6 366.8 L684.9 365.3" fill="none" stroke="#555" stroke-width="0.6"/></svg>
<div class="t" style="right:176.50px;top:378.81px;font-size:6.6px;color:#333;font-family:'Liberation Sans', sans-serif;font-weight:normal;">Side:</div>
<div class="t" style="left:672.90px;top:378.81px;font-size:6.6px;color:#333;font-family:'Liberation Sans', sans-serif;font-weight:normal;">Top</div>
<div class="t" style="left:692.60px;top:378.81px;font-size:6.6px;color:#333;font-family:'Liberation Sans', sans-serif;font-weight:normal;">Inr</div>
<div class="t" style="left:710.00px;top:378.81px;font-size:6.6px;color:#333;font-family:'Liberation Sans', sans-serif;font-weight:normal;">Bot</div>
<div class="t" style="right:172.60px;top:394.51px;font-size:6.6px;color:#333;font-family:'Liberation Sans', sans-serif;font-weight:normal;">Type:</div>
<div class="t" style="left:672.40px;top:394.51px;font-size:6.6px;color:#333;font-family:'Liberation Sans', sans-serif;font-weight:normal;">Plane</div>
<div class="t" style="left:699.00px;top:394.51px;font-size:6.6px;color:#333;font-family:'Liberation Sans', sans-serif;font-weight:normal;">Signal</div>
<div class="t" style="left:727.70px;top:394.51px;font-size:6.6px;color:#333;font-family:'Liberation Sans', sans-serif;font-weight:normal;">Mixed</div>
<div class="t" style="left:755.00px;top:394.51px;font-size:6.6px;color:#333;font-family:'Liberation Sans', sans-serif;font-weight:normal;">Hatched</div>
<svg style="position:absolute;left:0;top:0" width="830" height="500"><circle cx="667" cy="381.6" r="3.1" fill="#fff" stroke="#bdbdbd" stroke-width="0.6"/><circle cx="688.1" cy="381.6" r="3.1" fill="#fff" stroke="#bdbdbd" stroke-width="0.6"/><circle cx="705.3" cy="381.6" r="3.1" fill="#fff" stroke="#bdbdbd" stroke-width="0.6"/><circle cx="705.3" cy="381.6" r="1.2" fill="#000"/><circle cx="666.6" cy="397.6" r="3.1" fill="#fff" stroke="#bdbdbd" stroke-width="0.6"/><circle cx="694.3" cy="397.6" r="3.1" fill="#fff" stroke="#bdbdbd" stroke-width="0.6"/><circle cx="694.3" cy="397.6" r="1.2" fill="#000"/><circle cx="722.6" cy="397.6" r="3.1" fill="#fff" stroke="#bdbdbd" stroke-width="0.6"/><circle cx="750" cy="397.6" r="3.1" fill="#fff" stroke="#bdbdbd" stroke-width="0.6"/></svg>
<div class="r" style="left:623.00px;top:435.10px;width:189.00px;height:46.30px;background:#fff"></div>
<div class="r" style="left:623.00px;top:435.10px;width:189.00px;height:17.90px;background:conic-gradient(#dedede 0 25%,#f6f6f6 0 50%,#dedede 0 75%,#f6f6f6 0);background-size:2px 2px"></div>
<div class="r" style="left:623.00px;top:435.10px;width:18.00px;height:17.90px;background:#a3302c"></div>
<div class="r" style="left:644.40px;top:438.40px;width:10.90px;height:10.80px;background:#3d8ef0;border-radius:0.6px"></div>
<svg style="position:absolute;left:0;top:0" width="830" height="500"><path d="M646.6 443.9 L649 446.4 L653.3 440.7" fill="none" stroke="#fff" stroke-width="2" stroke-linecap="round" stroke-linejoin="round"/></svg>
<div class="t" style="left:659.70px;top:439.50px;font-size:8.6px;color:#2a2a2a;font-family:'Liberation Serif', serif;font-weight:normal;">1929bmask.gbr</div>
<div class="r" style="left:780.20px;top:435.10px;width:31.80px;height:17.90px;background:#c2c2c2"></div>
<svg style="position:absolute;left:0;top:0" width="830" height="500"><polygon points="788.2,441.5 791.9,448.4 784.5,448.4" fill="#000"/><path d="M801 441.4 L807.2 447.7 M807.2 441.4 L801 447.7" stroke="#000" stroke-width="1.3"/></svg>
<svg style="position:absolute;left:0;top:0" width="830" height="500"><line x1="631.5" y1="466.5" x2="690" y2="466.5" stroke="#7c7c7c" stroke-width="2.2" stroke-linecap="round"/><circle cx="686.3" cy="466.6" r="4.9" fill="#fff" stroke="#d0d0d0" stroke-width="0.6"/></svg>
<div class="r" style="left:709.20px;top:461.70px;width:81.00px;height:10.00px;background:#fff;border-radius:3px;box-shadow:0 0 0 0.6px #d6d6d6"></div>
<div class="t" style="left:713.70px;top:463.66px;font-size:6.9px;color:#222;font-family:'Liberation Sans', sans-serif;font-weight:normal;">Soldermask</div>
<svg style="position:absolute;left:0;top:0" width="830" height="500"><path d="M784.3 466.0 L785.4 464.6 L786.5 466.0 M784.3 467.7 L785.4 469.1 L786.5 467.7" fill="none" stroke="#555" stroke-width="0.6"/><circle cx="800" cy="466.9" r="5.9" fill="#000"/></svg>
<div class="t" style="left:700.10px;width:200px;text-align:center;top:462.12px;font-size:10px;color:#fff;font-family:'Liberation Serif', serif;font-weight:bold;font-style:italic;">i</div>
</body></html>
